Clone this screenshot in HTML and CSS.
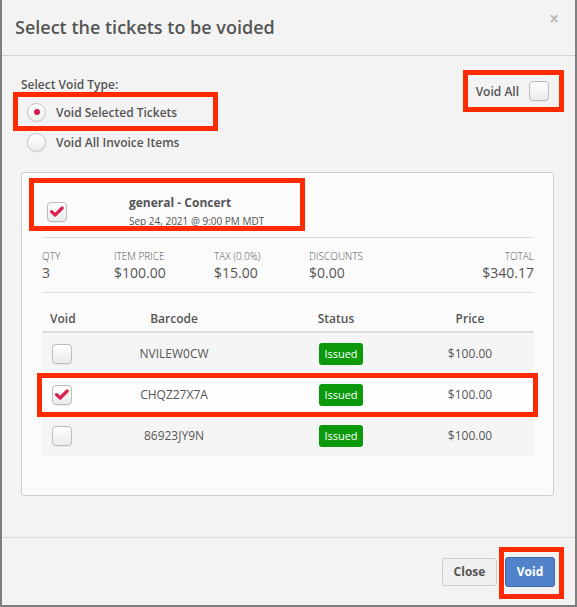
FILE: index.html
```html
<!DOCTYPE html>
<html>
<head>
<meta charset="utf-8">
<link rel="stylesheet" href="styles.css">
</head>
<body>
<div class="modal">
  <div class="modal-header">
    <h1 class="modal-title">Select the tickets to be voided</h1>
    <span class="close">&times;</span>
  </div>
  <div class="modal-body">
    <div class="top">
      <div class="void-type">
        <div class="type-label">Select Void Type:</div>
        <label class="radio-row marked">
          <span class="radio checked"></span>
          <span class="radio-text">Void Selected Tickets</span>
          <span class="mark mark-radio"></span>
        </label>
        <label class="radio-row">
          <span class="radio"></span>
          <span class="radio-text">Void All Invoice Items</span>
        </label>
      </div>
      <label class="void-all marked">
        <span class="void-all-text">Void All</span>
        <span class="checkbox"></span>
        <span class="mark mark-voidall"></span>
      </label>
    </div>

    <div class="panel">
      <div class="event marked">
        <span class="checkbox checked"><svg viewBox="0 0 20 20" width="20" height="20"><path d="M4.5 9.6 L8.2 13 L15.2 6" fill="none" stroke="#dc2252" stroke-width="3.2" stroke-linecap="round" stroke-linejoin="round"/></svg></span>
        <div class="event-text">
          <div class="event-name">general - Concert</div>
          <div class="event-date">Sep 24, 2021 @ 9:00 PM MDT</div>
        </div>
        <span class="mark mark-event"></span>
      </div>

      <div class="summary">
        <div class="sum-col"><div class="sum-label">QTY</div><div class="sum-value">3</div></div>
        <div class="sum-col"><div class="sum-label">ITEM PRICE</div><div class="sum-value">$100.00</div></div>
        <div class="sum-col"><div class="sum-label">TAX (0.0%)</div><div class="sum-value">$15.00</div></div>
        <div class="sum-col"><div class="sum-label">DISCOUNTS</div><div class="sum-value">$0.00</div></div>
        <div class="sum-col sum-total"><div class="sum-label">TOTAL</div><div class="sum-value">$340.17</div></div>
      </div>

      <div class="tickets">
        <div class="t-row t-head">
          <div class="c-void">Void</div>
          <div class="c-code">Barcode</div>
          <div class="c-status">Status</div>
          <div class="c-price">Price</div>
        </div>
        <div class="t-row odd">
          <div class="c-void"><span class="checkbox"></span></div>
          <div class="c-code">NVILEW0CW</div>
          <div class="c-status"><span class="badge">Issued</span></div>
          <div class="c-price">$100.00</div>
        </div>
        <div class="t-row even marked">
          <div class="c-void"><span class="checkbox checked"><svg viewBox="0 0 20 20" width="20" height="20"><path d="M4.5 9.6 L8.2 13 L15.2 6" fill="none" stroke="#dc2252" stroke-width="3.2" stroke-linecap="round" stroke-linejoin="round"/></svg></span></div>
          <div class="c-code">CHQZ27X7A</div>
          <div class="c-status"><span class="badge">Issued</span></div>
          <div class="c-price">$100.00</div>
          <span class="mark mark-row"></span>
        </div>
        <div class="t-row odd">
          <div class="c-void"><span class="checkbox"></span></div>
          <div class="c-code">86923JY9N</div>
          <div class="c-status"><span class="badge">Issued</span></div>
          <div class="c-price">$100.00</div>
        </div>
      </div>
    </div>
  </div>
  <div class="modal-footer">
    <button class="btn btn-close">Close</button>
    <span class="marked">
      <button class="btn btn-void">Void</button>
      <span class="mark mark-void"></span>
    </span>
  </div>
</div>
</body>
</html>
```

FILE: styles.css
```css
* { box-sizing: border-box; }
html, body { margin: 0; padding: 0; }
body {
  background: #f3f3f3;
  font-family: "Open Sans", "Liberation Sans", sans-serif;
  color: #555;
}
.modal {
  width: 577px;
  height: 607px;
  border: 2px solid #7f7f7f;
  border-top: none;
  background: #f3f3f3;
  display: flex;
  flex-direction: column;
}
.modal-header {
  height: 56px;
  flex: none;
  border-bottom: 1px solid #d2d2d2;
  display: flex;
  align-items: center;
  justify-content: space-between;
  padding: 0 16px 0 13px;
}
.modal-title {
  margin: 0;
  font-size: 18px;
  font-weight: 600;
  color: #555;
  line-height: 24px;
  margin-top: -2px;
}
.close {
  align-self: flex-start;
  margin-top: 9px;
  font-size: 17px;
  line-height: 20px;
  font-weight: 700;
  color: #bcbcbc;
}
.modal-body {
  flex: 1;
  padding: 20px 21px 0 19px;
}
.marked { position: relative; }
.mark {
  position: absolute;
  border: 5px solid #ff2a00;
  pointer-events: none;
}
.top {
  display: flex;
  justify-content: space-between;
  align-items: flex-start;
}
.type-label {
  font-size: 12px;
  font-weight: 600;
  line-height: 17px;
  color: #555;
}
.radio-row {
  display: flex;
  align-items: center;
  height: 30px;
  padding-left: 6px;
}
.radio-row.marked { margin-top: 4px; }
.radio {
  width: 19px;
  height: 19px;
  border-radius: 50%;
  border: 1px solid #c6c6c6;
  background: linear-gradient(#ffffff, #ececec);
  box-shadow: 0 1px 1px rgba(0,0,0,0.05);
  display: flex;
  align-items: center;
  justify-content: center;
  flex: none;
}
.radio.checked::after {
  content: "";
  width: 6px;
  height: 6px;
  border-radius: 50%;
  background: #d81b4f;
}
.radio-text {
  margin-left: 10px;
  font-size: 12px;
  font-weight: 600;
  color: #555;
}
.mark-radio { left: -8px; top: -5px; width: 205px; height: 39px; }

.void-all {
  display: flex;
  align-items: center;
  margin-right: 5px;
  height: 20px;
  margin-top: 5px;
}
.void-all-text {
  font-size: 12px;
  font-weight: 600;
  color: #555;
  margin-right: 10px;
}
.mark-voidall { left: -13px; top: -11px; width: 101px; height: 42px; }

.checkbox {
  width: 20px;
  height: 20px;
  border: 1px solid #bcbcbc;
  border-radius: 4px;
  background: linear-gradient(#ffffff, #eaeaea);
  box-shadow: 0 1px 1px rgba(0,0,0,0.06);
  display: inline-flex;
  align-items: center;
  justify-content: center;
  flex: none;
}
.checkbox svg { display: block; margin: -1px; }

.panel {
  margin-top: 15px;
  background: #fbfbfb;
  border: 1px solid #cfcfcf;
  border-radius: 3px;
  padding: 20px 19px 39px 20px;
}
.event {
  display: flex;
  align-items: center;
  height: 38px;
  padding-left: 5px;
  margin-bottom: 6px;
}
.event-text { margin-left: 62px; }
.event-name {
  font-size: 12px;
  font-weight: 700;
  line-height: 16px;
  color: #555;
  margin-top: -1px;
}
.event-date {
  font-size: 10px;
  line-height: 14px;
  margin-top: 3px;
  color: #555;
}
.mark-event { left: -13px; top: -15px; width: 276px; height: 53px; }

.summary {
  border-top: 1px solid #dcdcdc;
  border-bottom: 1px solid #dcdcdc;
  display: grid;
  grid-template-columns: 72px 100px 95px 1fr 1fr;
  padding: 11px 0 10px;
}
.sum-label {
  font-size: 10px;
  line-height: 14px;
  font-weight: 300;
  color: #555;
}
.sum-value {
  font-size: 14px;
  line-height: 19px;
  color: #555;
}
.sum-total { text-align: right; }

.t-row {
  display: grid;
  grid-template-columns: 58px 148px 176px 1fr;
  align-items: center;
  height: 41px;
  font-size: 12px;
  color: #555;
}
.t-row > div { text-align: center; }
.t-row .c-void { text-align: left; padding-left: 10px; }
.t-row .c-price { padding-right: 18px; }
.t-head {
  height: 40px;
  padding-top: 13px;
  border-bottom: 2px solid #dddddd;
  font-weight: 600;
}
.t-head .c-void { padding-left: 8px; }
.t-row.odd { background: #f5f5f5; }
.t-row.even { background: #fdfdfd; }
.c-void .checkbox { display: flex; }
.badge {
  display: inline-block;
  background: #0c9a0c;
  color: #fff;
  font-size: 11px;
  line-height: 22px;
  height: 22px;
  padding: 0 5px;
  border-radius: 3px;
  margin-left: 10px;
}
.mark-row { left: -5px; top: -1px; width: 501px; height: 44px; }

.modal-footer {
  height: 68px;
  flex: none;
  border-top: 1px solid #dadada;
  display: flex;
  justify-content: flex-end;
  align-items: center;
  gap: 8px;
  padding-right: 20px;
}
.btn {
  font-family: "Open Sans", "Liberation Sans", sans-serif;
  font-size: 12px;
  font-weight: 700;
  border-radius: 3px;
  cursor: pointer;
  display: block;
}
.btn-close {
  width: 55px;
  height: 28px;
  background: #f0f0f0;
  border: 1px solid #cdcdcd;
  color: #555;
}
.btn-void {
  width: 50px;
  height: 30px;
  background: #5282c9;
  border: 1px solid #3e6db4;
  color: #fff;
}
.mark-void { left: -6px; top: -10px; width: 65px; height: 52px; }
```
